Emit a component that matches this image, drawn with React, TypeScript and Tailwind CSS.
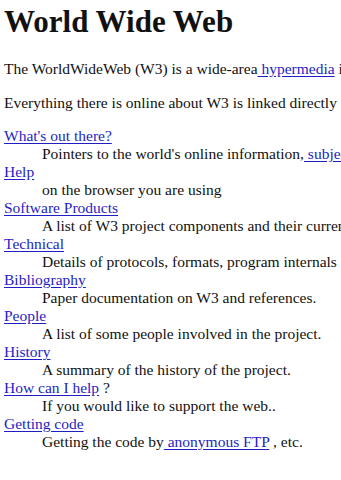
import React from "react";

const A = ({ children }: { children: React.ReactNode }) => (
  <a href="#" className="text-[#1e1ec4] underline underline-offset-[2px]">
    {children}
  </a>
);

const items: { dt: React.ReactNode; dd: React.ReactNode }[] = [
  {
    dt: <A>What's out there?</A>,
    dd: (
      <>
        Pointers to the world's online information,<A> subjects</A> ,<A> W3 servers</A>, etc.
      </>
    ),
  },
  { dt: <A>Help</A>, dd: <>on the browser you are using</> },
  {
    dt: <A>Software Products</A>,
    dd: <>A list of W3 project components and their current state. (e.g. Line Mode ,X11 Viola , NeXTStep , Servers , Tools , Mail robot , Library )</>,
  },
  { dt: <A>Technical</A>, dd: <>Details of protocols, formats, program internals etc</> },
  { dt: <A>Bibliography</A>, dd: <>Paper documentation on W3 and references.</> },
  { dt: <A>People</A>, dd: <>A list of some people involved in the project.</> },
  { dt: <A>History</A>, dd: <>A summary of the history of the project.</> },
  {
    dt: (
      <>
        <A>How can I help</A> ?
      </>
    ),
    dd: <>If you would like to support the web..</>,
  },
  {
    dt: <A>Getting code</A>,
    dd: (
      <>
        Getting the code by<A> anonymous FTP</A> , etc.
      </>
    ),
  },
];

export default function App() {
  return (
    <div className="w-[341px] h-[480px] overflow-hidden bg-white text-[#111] font-['Liberation_Serif','Times_New_Roman',serif] text-[15.5px] leading-[18px] whitespace-nowrap px-[4px]">
      <h1 className="mt-[4px] text-[31px] leading-[36px] font-bold">World Wide Web</h1>
      <p className="mt-[20px]">
        The WorldWideWeb (W3) is a wide-area<A> hypermedia</A> information retrieval initiative aiming to give universal access to a large universe of documents.
      </p>
      <p className="mt-[16px]">
        Everything there is online about W3 is linked directly or indirectly to this document, including an<A> executive summary</A> of the project,<A> Mailing lists</A> ,<A> Policy</A> , November's<A> W3 news</A> ,<A> Frequently Asked Questions</A> .
      </p>
      <dl className="mt-[15px]">
        {items.map((it, i) => (
          <React.Fragment key={i}>
            <dt>{it.dt}</dt>
            <dd className="ml-[38px]">{it.dd}</dd>
          </React.Fragment>
        ))}
      </dl>
    </div>
  );
}
